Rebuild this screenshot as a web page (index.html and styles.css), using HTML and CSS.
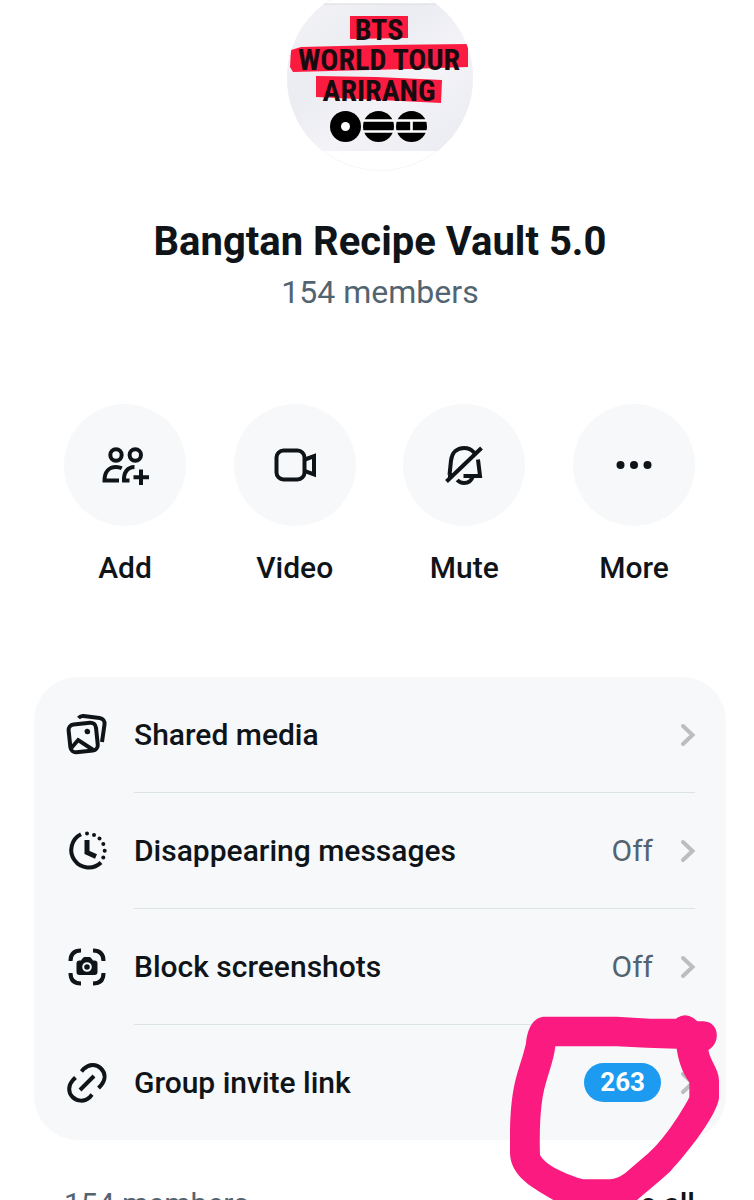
FILE: index.html
```html
<!DOCTYPE html>
<html lang="en">
<head>
<meta charset="utf-8">
<meta name="viewport" content="width=device-width, initial-scale=1">
<title>Bangtan Recipe Vault 5.0</title>
<link rel="stylesheet" href="styles.css">
</head>
<body>
<main class="page">
  <header class="group">
    <svg class="avatar" viewBox="0 0 186 172" role="img" aria-label="Group picture">
      <defs>
        <clipPath id="round"><circle cx="93" cy="78" r="93"/></clipPath>
        <linearGradient id="paper" x1="0" y1="0" x2="1" y2="1">
          <stop offset="0" stop-color="#f3f3f7"/><stop offset=".35" stop-color="#ebecf1"/>
          <stop offset=".6" stop-color="#f3f3f8"/><stop offset="1" stop-color="#eaebf0"/>
        </linearGradient>
      </defs>
      <circle cx="93" cy="78" r="92.500" fill="#fff" stroke="#f6f6f8"/>
      <g clip-path="url(#round)">
        <path d="M0 4h186v147H0z" fill="url(#paper)"/>
        <path d="M30 4h126" stroke="#d9dade"/>
        <path d="M63 16h58v22l-58 1z" fill="#fb1b40"/>
        <path d="M4 50l10-3 80-2 87-1v23l-60 2-115 3-3-5z" fill="#fb1b40"/>
        <path d="M29 76l60 1 66 3-1 23-40-2-85-4z" fill="#fb1b40"/>
      </g>
      <g class="poster" fill="#170b10">
        <text x="92" y="40">BTS</text>
        <text x="92" y="70">WORLD TOUR</text>
        <text x="92" y="101">ARIRANG</text>
      </g>
      <g fill="#000">
        <circle cx="58.500" cy="126.500" r="15.500"/><circle cx="91.500" cy="126.500" r="15.500"/><circle cx="124.500" cy="126.500" r="15.500"/>
      </g>
      <circle cx="58.500" cy="126.500" r="4.500" fill="#fff"/>
      <path d="M76 120.500h31M76 131.500h31M109 120.500h31M109 131.500h31M124.500 121v10" stroke="#fff" stroke-width="2.600"/>
    </svg>
    <h1 class="title">Bangtan Recipe Vault 5.0</h1>
    <p class="count">154 members</p>
  </header>

  <nav class="actions" aria-label="Group actions">
    <button class="action" type="button">
      <span class="disc"><svg class="glyph" viewBox="2 0 48 48">
        <circle cx="17" cy="14" r="5.700"/><circle cx="36.300" cy="14" r="5.700"/>
        <path d="M20 39.500H5.500C5.500 31 10 26 17 26c2.300 0 4.200.5 5.800 1.300M35.500 26c-7 0-11 5.500-10.500 13.500h5.500M42 28.500v15.500M34.500 36.300H50"/>
      </svg></span>
      <span>Add</span>
    </button>
    <button class="action" type="button">
      <span class="disc"><svg class="glyph" viewBox="0 0 48 48">
        <rect x="5.500" y="9.500" width="28" height="29" rx="7"/><path d="M34 18.500l9-3.300v18.200l-9-3.200"/>
      </svg></span>
      <span>Video</span>
    </button>
    <button class="action" type="button">
      <span class="disc"><svg class="glyph" viewBox="0 0 48 48">
        <path d="M8 34H12M9.500 34L11 19.500C12 11.500 17 7 24 7c4 0 7.500 1.500 10 4.500M38 18.500l2 16.500H23.500M33 35c-1.500 5-4.500 7-9 7-2.800 0-5-1-6.800-3M6.500 40.500L41.500 7"/>
      </svg></span>
      <span>Mute</span>
    </button>
    <button class="action" type="button">
      <span class="disc"><svg class="glyph dots" viewBox="0 0 48 48">
        <circle cx="10.500" cy="24" r="4"/><circle cx="24" cy="24" r="4"/><circle cx="37.500" cy="24" r="4"/>
      </svg></span>
      <span>More</span>
    </button>
  </nav>

  <ul class="card">
    <li class="item"><a class="row" href="#media">
      <svg class="icon" viewBox="0 1 42 42">
        <g transform="rotate(-6 17 25)"><rect x="3.500" y="10.500" width="27.500" height="28" rx="5.500"/><path d="M4 34l8-7.500L26 38"/><circle class="solid" cx="22" cy="19" r="2.800"/></g>
        <path d="M12.500 5c1.500-1.600 3-2.200 5-2l16 2c3.500.5 5.500 3 5 6.500l-2.500 17.500"/>
      </svg>
      <span class="body"><span class="name">Shared media</span>
      <svg class="chevron" viewBox="0 0 14 22"><path d="M2 2l9.500 9L2 20"/></svg></span>
    </a></li>
    <li class="item"><a class="row" href="#disappearing">
      <svg class="icon" viewBox="0 0 42 42">
        <path d="M15 4.300A17.500 17.500 0 1 0 35 32.500"/>
        <path class="hand" d="M21 10v12.500l9 4"/>
        <g class="solid"><circle cx="21" cy="3.500" r="2"/><circle cx="28" cy="5" r="2"/><circle cx="33.500" cy="8.500" r="2"/><circle cx="37.300" cy="14" r="2"/><circle cx="38.700" cy="20.700" r="2"/><circle cx="37.300" cy="27.500" r="2"/></g>
      </svg>
      <span class="body"><span class="name">Disappearing messages</span><span class="value">Off</span>
      <svg class="chevron" viewBox="0 0 14 22"><path d="M2 2l9.500 9L2 20"/></svg></span>
    </a></li>
    <li class="item"><a class="row" href="#screenshots">
      <svg class="icon" viewBox="0 0 42 42">
        <path d="M4.500 15C4.500 8 8 4.500 15 4.500M27 4.500c7 0 10.500 3.500 10.500 10.500M37.500 27c0 7-3.500 10.500-10.500 10.500M15 37.500C8 37.500 4.500 34 4.500 27"/>
        <path class="solid" d="M16 13l2-2h6l2 2 1 1.500h1.500a3 3 0 0 1 3 3V26a3 3 0 0 1-3 3h-15a3 3 0 0 1-3-3v-8.500a3 3 0 0 1 3-3H15z"/>
        <circle class="lens" cx="21" cy="21" r="3.800"/>
      </svg>
      <span class="body"><span class="name">Block screenshots</span><span class="value">Off</span>
      <svg class="chevron" viewBox="0 0 14 22"><path d="M2 2l9.500 9L2 20"/></svg></span>
    </a></li>
    <li class="item"><a class="row" href="#invite">
      <svg class="icon" viewBox="0 0 42 42">
        <path d="M15.500 9.500l2-2.500C23 2 30 1.500 35 6.500s4.500 11.500 0 17l-2.500 2.500M9.500 15.500L7 18C2 23.500 2 30.500 6.500 35s12 5 17 .5l2.500-3M14 28l14-14"/>
      </svg>
      <span class="body"><span class="name">Group invite link</span><span class="badge">263</span>
      <svg class="chevron" viewBox="0 0 14 22"><path d="M2 2l9.500 9L2 20"/></svg></span>
    </a>
      <svg class="marker" viewBox="0 0 792 660" aria-hidden="true">
        <path fill-rule="evenodd" d="M165 50H380L480 56H558Q590 32 622 64H640C690 66 692 130 655 150C662 185 685 205 687 240V295C680 345 600 450 540 515C500 550 465 580 435 605Q400 630 320 630Q240 630 190 600C130 565 62 530 60 460V400C62 240 90 210 108 130C112 85 130 50 165 50ZM196 139H380C440 142 500 145 560 146C565 180 575 215 598 247V292C570 345 520 420 475 460L405 520Q382 537 360 538H280C230 525 165 495 150 465C148 400 150 340 158 290C170 230 190 190 196 139Z"/>
      </svg>
    </li>
  </ul>

  <section class="members">
    <h2 class="members-count">154 members</h2>
    <a class="see-all" href="#members">See all</a>
  </section>
</main>
</body>
</html>
```
FILE: styles.css
```css
* { box-sizing: border-box; }

body {
  margin: 0;
  background: #fff;
  color: #0f1419;
  font-family: Roboto, "Noto Sans", sans-serif;
  font-size: 30px;
  line-height: 40px;
}

.page {
  height: 100vh;
  overflow: hidden;
  padding: 0 28px 0 34px;
}

.group { text-align: center; }
.avatar { display: block; width: 186px; height: 172px; margin: 0 auto; }
.poster {
  font-family: "Liberation Sans Narrow", "Roboto Condensed", sans-serif;
  font-size: 30px;
  font-weight: 700;
  text-anchor: middle;
}
.title { margin: 44px 0 0; font-size: 40px; line-height: 52px; font-weight: 700; }
.count { margin: 4px 0 0; font-size: 32px; color: #536471; }

.actions {
  display: flex;
  justify-content: space-between;
  margin-top: 92px;
  padding: 0 31px 0 30px;
}
.action {
  display: flex;
  flex-direction: column;
  align-items: center;
  gap: 22px;
  width: 122px;
  padding: 0;
  border: 0;
  background: none;
  color: inherit;
  font: inherit;
  font-weight: 500;
  cursor: pointer;
}
.disc {
  display: grid;
  place-items: center;
  width: 122px;
  height: 122px;
  border-radius: 50%;
  background: #f7f8fa;
}
.glyph, .icon, .chevron { fill: none; stroke: currentColor; stroke-width: 4; overflow: visible; }
.glyph { width: 48px; height: 48px; }
.dots, .icon .solid { fill: currentColor; stroke: none; }

.card {
  margin: 89px 0 0;
  padding: 0;
  list-style: none;
  border-radius: 44px;
  background: #f7f8fa;
}
.item { position: relative; }
.row {
  display: flex;
  align-items: center;
  gap: 26px;
  padding: 0 31px 0 32px;
  color: inherit;
  text-decoration: none;
}
.icon { flex: none; width: 42px; height: 42px; }
.hand { stroke-width: 5; }
.lens { fill: #0f1419; stroke: #f7f8fa; stroke-width: 2; }
.body {
  display: flex;
  flex: 1;
  align-items: center;
  height: 116px;
  border-bottom: 1px solid #dbe3e7;
}
.item:last-child .body { height: 115px; border-bottom: 0; }
.name { flex: 1; font-weight: 500; }
.value { color: #536471; }
.chevron {
  width: 14px;
  height: 22px;
  margin-left: 28px;
  color: #bcbdbf;
  stroke-linecap: round;
}
.badge {
  padding: 0 16px;
  border-radius: 20px;
  background: #1d9bf0;
  color: #fff;
  font-size: 26px;
  font-weight: 700;
  line-height: 39px;
  margin-right: -8px;
}
.marker {
  position: absolute;
  top: -25px;
  right: -28px;
  width: 264px;
  height: 220px;
  fill: #fb1a80;
  pointer-events: none;
}

.members {
  display: flex;
  justify-content: space-between;
  padding: 44px 31px 0 30px;
}
.members-count { margin: 0; font-size: 30px; font-weight: 400; color: #536471; }
.see-all { color: inherit; font-weight: 500; text-decoration: none; }
```
